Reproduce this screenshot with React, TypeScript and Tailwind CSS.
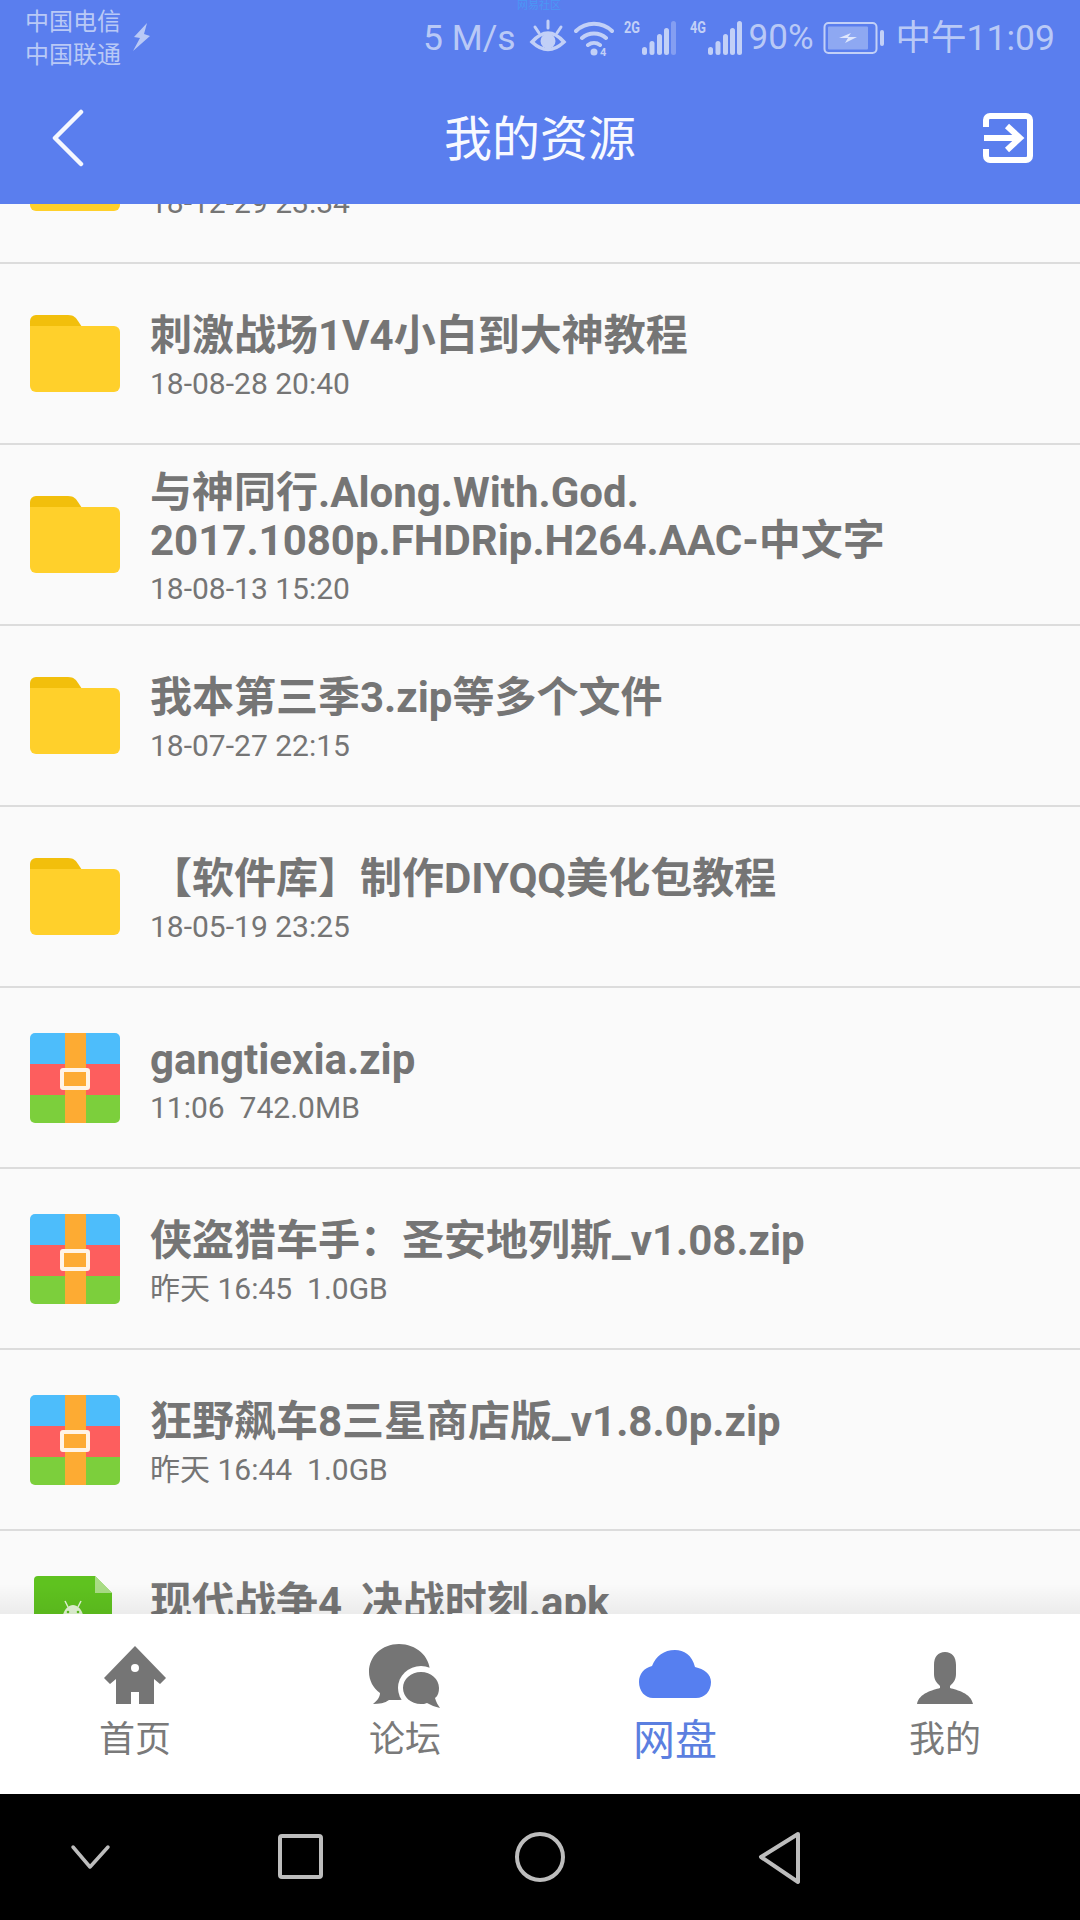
const sans = "font-['Roboto','Noto_Sans_CJK_SC',sans-serif]";

function Folder() {
  return (
    <svg width="90" height="77" viewBox="0 0 90 77" className="shrink-0">
      <path d="M0 6a6 6 0 0 1 6-6h32c6 0 8 3 10 6l4 6H0z" fill="#f2bf0c" />
      <path d="M0 11h84a6 6 0 0 1 6 6v54a6 6 0 0 1-6 6H6a6 6 0 0 1-6-6z" fill="#ffd02b" />
    </svg>
  );
}

function Zip() {
  return (
    <svg width="90" height="90" viewBox="0 0 90 90" className="shrink-0">
      <defs>
        <clipPath id="zipclip">
          <rect width="90" height="90" rx="5" />
        </clipPath>
      </defs>
      <g clipPath="url(#zipclip)">
        <rect width="90" height="31" fill="#4dbdfb" />
        <rect y="31" width="90" height="31" fill="#fd5e5e" />
        <rect y="62" width="90" height="28" fill="#7ccf3c" />
        <rect x="35" width="21" height="90" fill="#fdab33" />
        <rect x="32" y="37" width="26" height="18" rx="1" fill="#fdab33" stroke="#fff4e6" strokeWidth="4" />
      </g>
    </svg>
  );
}

function Apk() {
  return (
    <svg width="78" height="90" viewBox="0 0 78 90" className="shrink-0 ml-[4px] mr-[8px]">
      <path d="M4 0h57l17 17v69a4 4 0 0 1-4 4H4a4 4 0 0 1-4-4V4a4 4 0 0 1 4-4z" fill="#5fc21f" />
      <path d="M61 0l17 17H61z" fill="#a9dc85" />
      <path d="M28 46c0-10 5-17 11-17s11 7 11 17z" fill="#e3f5d6" />
      <path d="M31 25l3 6M47 25l-3 6" stroke="#e3f5d6" strokeWidth="1.5" />
      <circle cx="34" cy="36" r="1.3" fill="#5fc21f" />
      <circle cx="44" cy="36" r="1.3" fill="#5fc21f" />
    </svg>
  );
}

type Row = { icon: "folder" | "zip" | "apk"; title: string; sub: string };

const rows: Row[] = [
  { icon: "folder", title: "\u00a0", sub: "18-12-29 23:34" },
  { icon: "folder", title: "刺激战场1V4小白到大神教程", sub: "18-08-28 20:40" },
  { icon: "folder", title: "与神同行.Along.With.God.\n2017.1080p.FHDRip.H264.AAC-中文字", sub: "18-08-13 15:20" },
  { icon: "folder", title: "我本第三季3.zip等多个文件", sub: "18-07-27 22:15" },
  { icon: "folder", title: "【软件库】制作DIYQQ美化包教程", sub: "18-05-19 23:25" },
  { icon: "zip", title: "gangtiexia.zip", sub: "11:06  742.0MB" },
  { icon: "zip", title: "侠盗猎车手：圣安地列斯_v1.08.zip", sub: "昨天 16:45  1.0GB" },
  { icon: "zip", title: "狂野飙车8三星商店版_v1.8.0p.zip", sub: "昨天 16:44  1.0GB" },
  { icon: "apk", title: "现代战争4_决战时刻.apk", sub: "\u00a0" },
];

function ListRow({ r }: { r: Row }) {
  return (
    <div className="h-[181px] shrink-0 flex items-center pl-[30px] border-b-2 border-[#dcdcdc]">
      {r.icon === "folder" && <Folder />}
      {r.icon === "zip" && <Zip />}
      {r.icon === "apk" && <Apk />}
      <div className="ml-[30px] flex flex-col pt-[9px]">
        <div className="text-[42px] leading-[48px] font-bold text-[#757575] whitespace-pre-line">{r.title}</div>
        <div className="mt-[3px] text-[30px] leading-[42px] text-[#757575] whitespace-pre">{r.sub}</div>
      </div>
    </div>
  );
}

function Signal({ label, faint }: { label: string; faint?: boolean }) {
  const c = "#c2d0f7";
  return (
    <svg width="52" height="36" viewBox="0 0 52 36" className="shrink-0">
      <text x="0" y="13" fontSize="17" fontWeight="700" fill={c} fontFamily="Roboto" textLength="16" lengthAdjust="spacingAndGlyphs">{label}</text>
      <rect x="18" y="27" width="5" height="8" rx="2.5" fill={c} />
      <rect x="25.5" y="21" width="5" height="14" rx="2.5" fill={c} />
      <rect x="33" y="14" width="5" height="21" rx="2.5" fill={c} />
      <rect x="40" y="8" width="5" height="27" rx="2.5" fill={c} />
      <rect x="47" y="1" width="5" height="34" rx="2.5" fill={c} opacity={faint ? 0.4 : 1} />
    </svg>
  );
}

function Tab({ label, active, children }: { label: string; active?: boolean; children: React.ReactNode }) {
  return (
    <div className="flex-1 flex flex-col items-center">
      <div className="h-[66px] flex items-start justify-center">{children}</div>
      <div className={active ? "mt-[7px] text-[42px] leading-[48px] text-[#5b7fe0]" : "mt-[7px] text-[36px] leading-[46px] text-[#7a7a7a]"}>{label}</div>
    </div>
  );
}

export default function App() {
  return (
    <div className={`w-[1080px] h-[1920px] flex flex-col overflow-hidden bg-[#fafafa] ${sans}`}>
      <header className="relative z-10 h-[204px] shrink-0 bg-[#5a7eee] flex flex-col">
        <div className="relative h-[75px] flex items-center pl-[25px] pr-[25px] text-[#b9c9f6]">
          <div className="absolute left-[517px] top-0 text-[11px] leading-[11px] text-[#4a97f5]">网易社区</div>
          <div className="text-[24px] leading-[33px] pt-[2px]">
            <div>中国电信</div>
            <div>中国联通</div>
          </div>
          <svg width="18" height="28" viewBox="0 0 18 28" className="ml-[12px] -mt-[1px]">
            <path d="M14 0L1 14l6 1-7 13L17 13l-6-2z" fill="#b9c9f6" />
          </svg>
          <div className="ml-auto flex items-center">
            <span className="text-[35.5px] leading-[40px]">5 M/s</span>
            <svg width="38" height="38" viewBox="0 0 38 38" className="ml-[13px]">
              <path d="M3 23Q19 5 35 23Q19 38 3 23z" fill="none" stroke="#c2d0f7" strokeWidth="3.5" />
              <circle cx="19" cy="22" r="7.5" fill="#c2d0f7" />
              <path d="M6 8l4 6M19 2v7M32 8l-4 6" stroke="#c2d0f7" strokeWidth="3" strokeLinecap="round" />
            </svg>
            <svg width="40" height="38" viewBox="0 0 40 38" className="ml-[7px]">
              <path d="M2 12a26 26 0 0 1 36 0M8 19a18 18 0 0 1 24 0M14 26a10 10 0 0 1 12 0" fill="none" stroke="#c2d0f7" strokeWidth="4" strokeLinecap="round" />
              <circle cx="20" cy="33" r="3.5" fill="#c2d0f7" />
              <text x="26" y="37" fontSize="11" fontWeight="700" fill="#c2d0f7" fontFamily="Roboto">4</text>
            </svg>
            <div className="ml-[10px]"><Signal label="2G" faint /></div>
            <div className="ml-[14px]"><Signal label="4G" /></div>
            <span className="ml-[7px] text-[35px] leading-[40px]">90%</span>
            <svg width="62" height="34" viewBox="0 0 62 34" className="ml-[9px]">
              <rect x="1.5" y="2" width="52" height="30" rx="4" fill="none" stroke="#c2d0f7" strokeWidth="2" />
              <rect x="5" y="5.5" width="40" height="23" rx="1" fill="#8ea8f2" />
              <path d="M16 17l12-5-3 4h9l-12 6 3-5z" fill="#dfe7fc" />
              <rect x="57" y="9" width="4" height="16" rx="2" fill="#c2d0f7" />
            </svg>
            <span className="ml-[11px] text-[35.5px] leading-[40px]">中午11:09</span>
          </div>
        </div>
        <div className="relative flex-1 flex items-center justify-center">
          <svg width="36" height="58" viewBox="0 0 36 58" className="absolute left-[50px] top-[34px]">
            <path d="M31 3L5 29l26 26" fill="none" stroke="#f4f7ff" strokeWidth="4.5" strokeLinecap="round" strokeLinejoin="round" />
          </svg>
          <h1 className="text-[48px] leading-[60px] font-normal text-[#f7f9ff]">我的资源</h1>
          <svg width="52" height="52" viewBox="0 0 52 52" className="absolute left-[982px] top-[37px]">
            <path d="M4 15V8a4 4 0 0 1 4-4h36a4 4 0 0 1 4 4v36a4 4 0 0 1-4 4H8a4 4 0 0 1-4-4v-7" fill="none" stroke="#ffffff" strokeWidth="6" />
            <path d="M2 26h35M25 14l13 12-13 12" fill="none" stroke="#ffffff" strokeWidth="6" />
          </svg>
        </div>
      </header>

      <main className="relative flex-1 min-h-0 overflow-hidden">
        <div className="-mt-[121px] flex flex-col">
          {rows.map((r, i) => (
            <ListRow key={i} r={r} />
          ))}
        </div>
        <div className="absolute left-0 right-0 bottom-0 h-[30px] bg-gradient-to-b from-transparent to-[#0000000f]" />
      </main>

      <nav className="h-[180px] shrink-0 bg-white flex pt-[30px]">
        <Tab label="首页">
          <svg width="62" height="58" viewBox="0 0 62 58" className="mt-[2px]">
            <path d="M31 0L62 32l-6 6-6-5v25H35V46H27v12H12V33l-6 5-6-6z" fill="#757575" />
            <circle cx="31" cy="22" r="4" fill="#ffffff" />
          </svg>
        </Tab>
        <Tab label="论坛">
          <svg width="72" height="65" viewBox="0 0 72 65">
            <path d="M30 0c17 0 31 12 31 28 0 16-14 28-31 28-4 0-7 0-10 0-4 3-10 4-16 4 4-3 7-7 7-11C4 44 0 36 0 28 0 12 13 0 30 0z" fill="#757575" />
            <ellipse cx="52" cy="44" rx="23" ry="22" fill="#ffffff" />
            <path d="M52 28c10 0 18 7 18 16 0 4-1 8-4 10 1 4 3 7 5 10-5-1-9-3-13-5-2 1-4 1-6 1-10 0-18-7-18-16s8-16 18-16z" fill="#757575" />
          </svg>
        </Tab>
        <Tab label="网盘" active>
          <svg width="72" height="48" viewBox="0 0 72 48" className="mt-[6px]">
            <path d="M14 48C6 48 0 41 0 32c0-8 5-14 13-16C17 6 25 0 36 0c9 0 17 5 20 17 9 2 16 7 16 15 0 9-6 16-15 16z" fill="#567ff0" />
          </svg>
        </Tab>
        <Tab label="我的">
          <svg width="56" height="52" viewBox="0 0 56 52" className="mt-[8px]">
            <path d="M28 0c7 0 11 5 11 13v9c0 6-3 9-6 12v2c7 2 21 5 23 16H0c2-11 16-14 23-16v-2c-3-3-6-6-6-12v-9C17 5 21 0 28 0z" fill="#757575" />
          </svg>
        </Tab>
      </nav>

      <div className="h-[126px] shrink-0 bg-black flex items-center">
        <svg width="1080" height="126" viewBox="0 0 1080 126" fill="none" stroke="#bdbdbd">
          <path d="M73 53l17 20 18-20" strokeWidth="3.5" strokeLinecap="round" strokeLinejoin="round" />
          <rect x="280" y="42" width="41" height="41" rx="2" strokeWidth="4" />
          <circle cx="540" cy="63" r="23" strokeWidth="4" />
          <path d="M798 40L761 63l37 25z" strokeWidth="4" strokeLinejoin="round" />
        </svg>
      </div>
    </div>
  );
}
